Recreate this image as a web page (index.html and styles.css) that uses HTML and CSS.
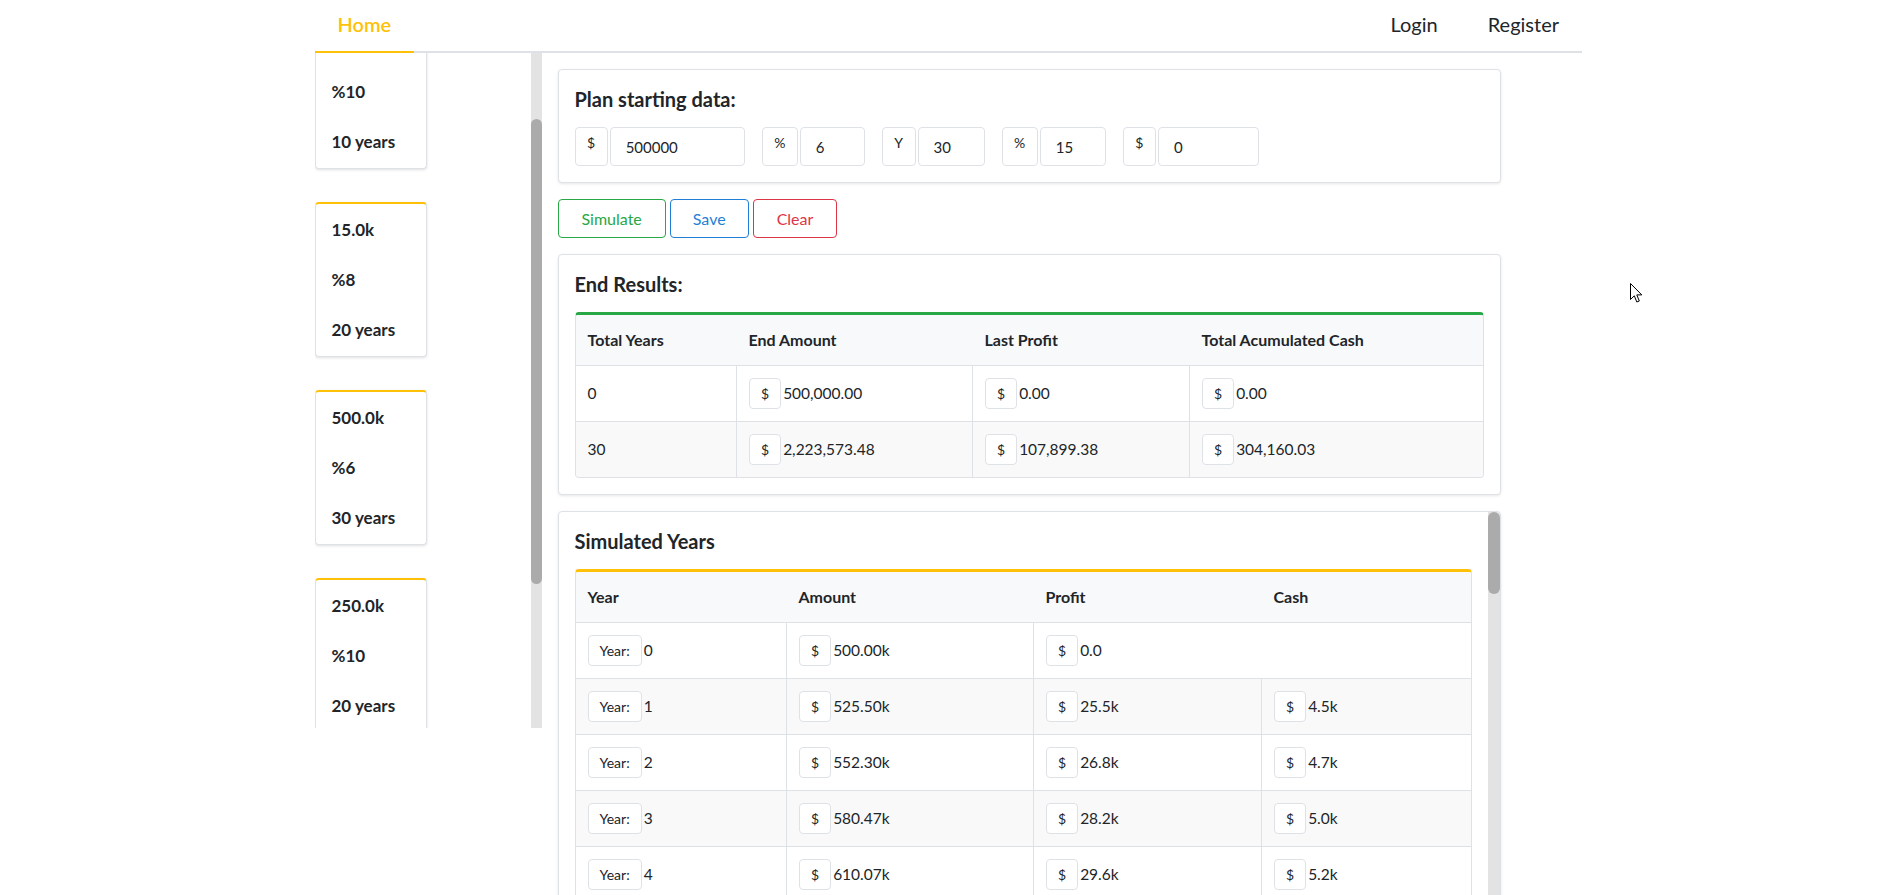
FILE: index.html
```html
<!DOCTYPE html>
<html lang="en">
<head>
<meta charset="utf-8">
<title>Plan Simulator</title>
<link rel="stylesheet" href="styles.css">
</head>
<body>
<header class="topbar">
  <nav class="nav">
    <a class="nav-link active" href="#">Home</a>
    <div class="nav-right">
      <a class="nav-link" href="#">Login</a>
      <a class="nav-link" href="#">Register</a>
    </div>
  </nav>
</header>

<div class="layout">
  <aside class="sidebar">
    <div class="sidebar-scroll">
      <div class="plan-list">
        <div class="plan-card"><span>100.0k</span><span>%10</span><span>10 years</span></div>
        <div class="plan-card"><span>15.0k</span><span>%8</span><span>20 years</span></div>
        <div class="plan-card"><span>500.0k</span><span>%6</span><span>30 years</span></div>
        <div class="plan-card"><span>250.0k</span><span>%10</span><span>20 years</span></div>
        <div class="plan-card"><span>50.0k</span><span>%5</span><span>15 years</span></div>
      </div>
    </div>
    <div class="scroll-track side-track"><div class="scroll-thumb side-thumb"></div></div>
  </aside>

  <main class="main">
    <section class="card">
      <h5 class="card-title">Plan starting data:</h5>
      <div class="inputs">
        <div class="input-group"><span class="addon">$</span><input class="field w-amount" value="500000"></div>
        <div class="input-group"><span class="addon">%</span><input class="field w-rate" value="6"></div>
        <div class="input-group"><span class="addon">Y</span><input class="field w-years" value="30"></div>
        <div class="input-group"><span class="addon">%</span><input class="field w-tax" value="15"></div>
        <div class="input-group"><span class="addon">$</span><input class="field w-extra" value="0"></div>
      </div>
    </section>

    <div class="actions">
      <button class="btn btn-green">Simulate</button>
      <button class="btn btn-blue">Save</button>
      <button class="btn btn-red">Clear</button>
    </div>

    <section class="card">
      <h5 class="card-title">End Results:</h5>
      <div class="table-wrap green">
        <table class="tbl">
          <colgroup><col class="e1"><col class="e2"><col class="e3"><col class="e4"></colgroup>
          <thead>
            <tr><th>Total Years</th><th>End Amount</th><th>Last Profit</th><th>Total Acumulated Cash</th></tr>
          </thead>
          <tbody>
            <tr><td>0</td><td><span class="cur">$</span>500,000.00</td><td><span class="cur">$</span>0.00</td><td><span class="cur">$</span>0.00</td></tr>
            <tr><td>30</td><td><span class="cur">$</span>2,223,573.48</td><td><span class="cur">$</span>107,899.38</td><td><span class="cur">$</span>304,160.03</td></tr>
          </tbody>
        </table>
      </div>
    </section>

    <section class="card sim-card">
      <div class="sim-scroll">
        <h5 class="card-title">Simulated Years</h5>
        <div class="table-wrap amber">
          <table class="tbl">
            <colgroup><col class="s1"><col class="s2"><col class="s3"><col class="s4"></colgroup>
            <thead>
              <tr><th>Year</th><th>Amount</th><th>Profit</th><th>Cash</th></tr>
            </thead>
            <tbody>
              <tr><td><span class="cur">Year:</span>0</td><td><span class="cur">$</span>500.00k</td><td><span class="cur">$</span>0.0</td></tr>
              <tr><td><span class="cur">Year:</span>1</td><td><span class="cur">$</span>525.50k</td><td><span class="cur">$</span>25.5k</td><td><span class="cur">$</span>4.5k</td></tr>
              <tr><td><span class="cur">Year:</span>2</td><td><span class="cur">$</span>552.30k</td><td><span class="cur">$</span>26.8k</td><td><span class="cur">$</span>4.7k</td></tr>
              <tr><td><span class="cur">Year:</span>3</td><td><span class="cur">$</span>580.47k</td><td><span class="cur">$</span>28.2k</td><td><span class="cur">$</span>5.0k</td></tr>
              <tr><td><span class="cur">Year:</span>4</td><td><span class="cur">$</span>610.07k</td><td><span class="cur">$</span>29.6k</td><td><span class="cur">$</span>5.2k</td></tr>
              <tr><td><span class="cur">Year:</span>5</td><td><span class="cur">$</span>641.18k</td><td><span class="cur">$</span>31.1k</td><td><span class="cur">$</span>5.5k</td></tr>
              <tr><td><span class="cur">Year:</span>6</td><td><span class="cur">$</span>673.88k</td><td><span class="cur">$</span>32.7k</td><td><span class="cur">$</span>5.8k</td></tr>
              <tr><td><span class="cur">Year:</span>7</td><td><span class="cur">$</span>708.25k</td><td><span class="cur">$</span>34.4k</td><td><span class="cur">$</span>6.1k</td></tr>
              <tr><td><span class="cur">Year:</span>8</td><td><span class="cur">$</span>744.37k</td><td><span class="cur">$</span>36.1k</td><td><span class="cur">$</span>6.4k</td></tr>
              <tr><td><span class="cur">Year:</span>9</td><td><span class="cur">$</span>782.34k</td><td><span class="cur">$</span>38.0k</td><td><span class="cur">$</span>6.7k</td></tr>
              <tr><td><span class="cur">Year:</span>10</td><td><span class="cur">$</span>822.23k</td><td><span class="cur">$</span>39.9k</td><td><span class="cur">$</span>7.0k</td></tr>
              <tr><td><span class="cur">Year:</span>11</td><td><span class="cur">$</span>864.17k</td><td><span class="cur">$</span>41.9k</td><td><span class="cur">$</span>7.4k</td></tr>
              <tr><td><span class="cur">Year:</span>12</td><td><span class="cur">$</span>908.24k</td><td><span class="cur">$</span>44.1k</td><td><span class="cur">$</span>7.8k</td></tr>
              <tr><td><span class="cur">Year:</span>13</td><td><span class="cur">$</span>954.56k</td><td><span class="cur">$</span>46.3k</td><td><span class="cur">$</span>8.2k</td></tr>
              <tr><td><span class="cur">Year:</span>14</td><td><span class="cur">$</span>1003.24k</td><td><span class="cur">$</span>48.7k</td><td><span class="cur">$</span>8.6k</td></tr>
              <tr><td><span class="cur">Year:</span>15</td><td><span class="cur">$</span>1054.41k</td><td><span class="cur">$</span>51.2k</td><td><span class="cur">$</span>9.0k</td></tr>
              <tr><td><span class="cur">Year:</span>16</td><td><span class="cur">$</span>1108.18k</td><td><span class="cur">$</span>53.8k</td><td><span class="cur">$</span>9.5k</td></tr>
              <tr><td><span class="cur">Year:</span>17</td><td><span class="cur">$</span>1164.70k</td><td><span class="cur">$</span>56.5k</td><td><span class="cur">$</span>10.0k</td></tr>
              <tr><td><span class="cur">Year:</span>18</td><td><span class="cur">$</span>1224.10k</td><td><span class="cur">$</span>59.4k</td><td><span class="cur">$</span>10.5k</td></tr>
              <tr><td><span class="cur">Year:</span>19</td><td><span class="cur">$</span>1286.53k</td><td><span class="cur">$</span>62.4k</td><td><span class="cur">$</span>11.0k</td></tr>
              <tr><td><span class="cur">Year:</span>20</td><td><span class="cur">$</span>1352.14k</td><td><span class="cur">$</span>65.6k</td><td><span class="cur">$</span>11.6k</td></tr>
              <tr><td><span class="cur">Year:</span>21</td><td><span class="cur">$</span>1421.10k</td><td><span class="cur">$</span>69.0k</td><td><span class="cur">$</span>12.2k</td></tr>
              <tr><td><span class="cur">Year:</span>22</td><td><span class="cur">$</span>1493.58k</td><td><span class="cur">$</span>72.5k</td><td><span class="cur">$</span>12.8k</td></tr>
              <tr><td><span class="cur">Year:</span>23</td><td><span class="cur">$</span>1569.75k</td><td><span class="cur">$</span>76.2k</td><td><span class="cur">$</span>13.4k</td></tr>
              <tr><td><span class="cur">Year:</span>24</td><td><span class="cur">$</span>1649.81k</td><td><span class="cur">$</span>80.1k</td><td><span class="cur">$</span>14.1k</td></tr>
              <tr><td><span class="cur">Year:</span>25</td><td><span class="cur">$</span>1733.95k</td><td><span class="cur">$</span>84.1k</td><td><span class="cur">$</span>14.8k</td></tr>
              <tr><td><span class="cur">Year:</span>26</td><td><span class="cur">$</span>1822.38k</td><td><span class="cur">$</span>88.4k</td><td><span class="cur">$</span>15.6k</td></tr>
              <tr><td><span class="cur">Year:</span>27</td><td><span class="cur">$</span>1915.32k</td><td><span class="cur">$</span>92.9k</td><td><span class="cur">$</span>16.4k</td></tr>
              <tr><td><span class="cur">Year:</span>28</td><td><span class="cur">$</span>2013.00k</td><td><span class="cur">$</span>97.7k</td><td><span class="cur">$</span>17.2k</td></tr>
              <tr><td><span class="cur">Year:</span>29</td><td><span class="cur">$</span>2115.67k</td><td><span class="cur">$</span>102.7k</td><td><span class="cur">$</span>18.1k</td></tr>
              <tr><td><span class="cur">Year:</span>30</td><td><span class="cur">$</span>2223.57k</td><td><span class="cur">$</span>107.9k</td><td><span class="cur">$</span>19.0k</td></tr>
            </tbody>
          </table>
        </div>
      </div>
      <div class="scroll-track sim-track"><div class="scroll-thumb sim-thumb"></div></div>
    </section>
  </main>
</div>

<svg class="cursor" width="13" height="21" viewBox="0 0 13 21" aria-hidden="true">
  <path d="M0.5 0.5 L0.5 16.5 L4.3 12.8 L6.8 19 L9.3 18 L6.8 11.9 L11.8 11.9 Z" fill="#fff" stroke="#000" stroke-width="1" stroke-linejoin="miter"/>
</svg>

<script src="script.js"></script>
</body>
</html>
```

FILE: styles.css
```css
* { box-sizing: border-box; }

html, body {
  margin: 0;
  height: 100%;
  overflow: hidden;
}

body {
  font-family: Lato, "Noto Sans", sans-serif;
  color: #212529;
  background: #fff;
}

/* ---------- top navigation ---------- */
.nav {
  width: 1267px;
  height: 53px;
  margin: 0 auto;
  display: flex;
  justify-content: space-between;
  border-bottom: 2px solid #dee2e6;
}

.nav-right { display: flex; }

.nav-link {
  display: block;
  padding: 0 24px 3px 26px;
  line-height: 48px;
  font-size: 20px;
  color: #212529;
  text-decoration: none;
}

.nav-right .nav-link:last-child { padding-right: 23px; }

.nav-link.active {
  padding: 0 23px 3px 22.5px;
  color: #ffc107;
  font-weight: 600;
  border-bottom: 2px solid #ffc107;
  height: 53px;
}

/* ---------- page layout ---------- */
.layout {
  width: 1268px;
  margin: 0 auto;
  display: flex;
  gap: 16px;
  align-items: flex-start;
}

.sidebar {
  flex: none;
  width: 227px;
  height: 675px;
  display: flex;
}

.sidebar-scroll {
  flex: 1;
  overflow-y: auto;
  scrollbar-width: none;
}

.sidebar-scroll::-webkit-scrollbar,
.sim-scroll::-webkit-scrollbar { display: none; }

.scroll-track {
  flex: none;
  background: #e3e3e3;
}

.scroll-thumb {
  background: #ababab;
  border-radius: 6px;
}

.side-track { width: 11px; }
.side-thumb { margin-top: 66px; height: 465px; }

.sim-track { width: 12px; }
.sim-thumb { height: 82px; }

.plan-list {
  display: flex;
  flex-direction: column;
  gap: 33px;
  padding: 56px 0 16px;
}

.plan-card {
  width: 112px;
  background: #fff;
  border: 1px solid #dee2e6;
  border-top: 2px solid #ffc107;
  border-radius: 4px;
  padding: 14px 16px;
  box-shadow: 0 1px 3px rgba(0, 0, 0, .13);
  display: flex;
  flex-direction: column;
  gap: 26px;
  font-size: 17px;
  font-weight: 700;
  line-height: 24px;
}

.main {
  flex: none;
  width: 943px;
  padding-top: 16px;
  display: flex;
  flex-direction: column;
  gap: 16px;
}

/* ---------- cards ---------- */
.card {
  background: #fff;
  border: 1px solid #dee2e6;
  border-radius: 4px;
  padding: 16px;
  box-shadow: 0 1px 3px rgba(0, 0, 0, .1);
}

.card-title {
  margin: 0 0 15px;
  font-size: 20px;
  font-weight: 700;
  line-height: 26px;
}

.sim-card {
  height: 391px;
  padding: 0;
  display: flex;
  overflow: hidden;
}

.sim-scroll {
  flex: 1;
  min-width: 0;
  padding: 16px;
  overflow-y: auto;
  scrollbar-width: none;
}

/* ---------- starting data inputs ---------- */
.inputs {
  display: flex;
  gap: 17px;
}

.input-group {
  display: flex;
  gap: 2px;
}

.addon {
  height: 39px;
  padding: 5px 11.5px 0;
  border: 1px solid #dee2e6;
  border-radius: 4px;
  font-size: 14px;
  line-height: 20px;
}

.field {
  height: 39px;
  padding: 0 15px;
  border: 1px solid #dee2e6;
  border-radius: 4px;
  font-family: inherit;
  font-size: 15px;
  color: #212529;
  background: #fff;
  outline: none;
}

.w-amount { width: 135px; }
.w-rate { width: 65px; }
.w-years { width: 67px; }
.w-tax { width: 66px; }
.w-extra { width: 101px; }

/* ---------- buttons ---------- */
.actions {
  display: flex;
  gap: 4px;
}

.btn {
  height: 39px;
  padding: 0 23px;
  background: #fff;
  border: 1px solid;
  border-radius: 4px;
  font-family: inherit;
  font-size: 16px;
}

.btn-green { color: #28a745; border-color: #28a745; }
.btn-blue { color: #1f7fd6; border-color: #1f7fd6; padding: 0 22px; }
.btn-red { color: #dc3545; border-color: #dc3545; }

/* ---------- tables ---------- */
.table-wrap {
  border: 1px solid #dee2e6;
  border-radius: 4px;
  overflow: hidden;
}

.table-wrap.green { border-top: 3px solid #28a745; }
.table-wrap.amber { border-top: 3px solid #ffc107; }

.tbl {
  width: 100%;
  border-collapse: collapse;
  table-layout: fixed;
  font-size: 15.5px;
}

.e1 { width: 161px; }
.e2 { width: 236px; }
.e3 { width: 217px; }
.e4 { width: 293px; }

.s1 { width: 211px; }
.s2 { width: 247px; }
.s3 { width: 228px; }
.s4 { width: 209px; }

.tbl th {
  text-align: left;
  font-size: 16px;
  font-weight: 700;
  padding: 12px;
  line-height: 26px;
  background: #f8f9fa;
  border-bottom: 1px solid #dee2e6;
}

.tbl td {
  padding: 12px;
  line-height: 31px;
  border-top: 1px solid #dee2e6;
  white-space: nowrap;
}

.tbl td + td { border-left: 1px solid #dee2e6; }

.tbl tbody tr:nth-child(even) { background: #f9f9f9; }

.cur {
  display: inline-block;
  vertical-align: top;
  height: 31px;
  line-height: 29px;
  padding: 0 11px;
  margin-right: 2px;
  background: #fff;
  border: 1px solid #dee2e6;
  border-radius: 4px;
  font-size: 14px;
}

/* ---------- mouse pointer overlay ---------- */
.cursor {
  position: absolute;
  left: 1630px;
  top: 283px;
}
```

FILE: script.js
```js
document.querySelector('.sidebar-scroll').scrollTop = 95;
```
